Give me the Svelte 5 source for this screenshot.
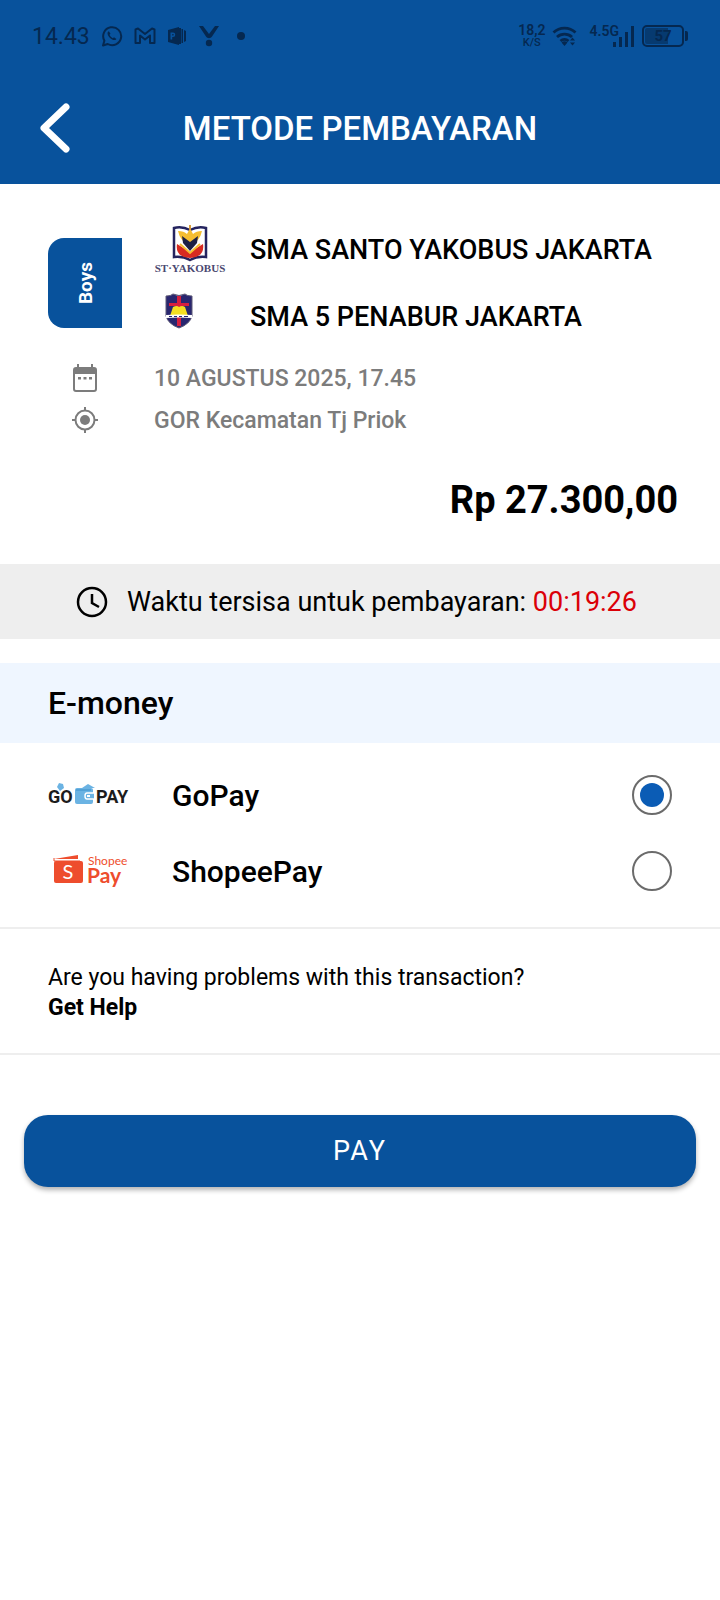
<script lang="ts">
	let method = 'gopay'

	const teams = [
		{ logo: 'yakobus', name: 'SMA SANTO YAKOBUS JAKARTA' },
		{ logo: 'penabur', name: 'SMA 5 PENABUR JAKARTA' }
	]

	const methods = [
		{ id: 'gopay', label: 'GoPay' },
		{ id: 'shopeepay', label: 'ShopeePay' }
	]
</script>

<div class="screen">
	<header>
		<div class="status">
			<div class="left">
				<span class="time">14.43</span>
				<svg width="22" height="22" viewBox="0 0 22 22" fill="none" stroke="currentColor" stroke-width="2">
					<path d="M2 20.500l1.400-4.800A9 9 0 1 1 6.700 19z" stroke-linejoin="round" />
					<path d="M7.800 6.200c-2 1-1.500 4 1 6.500s5.400 3.300 6.600 1.200l-2.400-1.700-1.200 1c-1.500-.6-2.700-1.800-3.300-3.400l1-1z" fill="currentColor" stroke="none" />
				</svg>
				<svg width="22" height="18" viewBox="0 0 22 18" fill="none" stroke="currentColor" stroke-width="2" stroke-linejoin="round">
					<path d="M1.500 16V2.500l2.500-1L11 7l7-5.500 2.500 1V16H16V8.500L11 12.500 6 8.500V16z" />
				</svg>
				<svg width="20" height="20" viewBox="0 0 20 20" fill="currentColor">
					<path fill-rule="evenodd" d="M1 4l11-3v18L1 16zM3.500 6.500v7h1.700V11H6a2.200 2.200 0 0 0 0-4.500zM5.200 8H6a.8.8 0 0 1 0 1.600h-.8z" />
					<path d="M12 2h2v16h-2zM14.500 3h1.500v14h-1.500zM17 4l2 1v10l-2 1z" />
				</svg>
				<svg width="22" height="22" viewBox="0 0 22 22" fill="currentColor">
					<path d="M1 1h4l6 8 6-8h4l-7 10.500c-1.500 2.200-4.500 2.200-6 0z" />
					<circle cx="11" cy="18" r="3.200" />
				</svg>
				<svg width="16" height="10" viewBox="0 0 16 10"><circle cx="10" cy="5" r="4" fill="currentColor" /></svg>
			</div>
			<div class="right">
				<span class="speed"><b>18,2</b><small>K/S</small></span>
				<svg width="26" height="22" viewBox="0 0 26 22" fill="none" stroke="currentColor" stroke-width="2.800">
					<path d="M1.500 7.500a16 16 0 0 1 22 0M5 12a11 11 0 0 1 15 0M8.500 16a6 6 0 0 1 8 0" />
					<path d="M9.500 17.500a4 4 0 0 1 6 0l-3 3.500zM18 15.500l2.500-3 2.500 3zM18 17.500l2.500 3 2.500-3z" fill="currentColor" stroke="none" />
				</svg>
				<span class="signal">
					<b>4.5G</b>
					<svg width="22" height="22" viewBox="0 0 22 22" fill="currentColor">
						<path d="M0 17h3v5H0zM6 12h3v10H6zM12 7h3v15h-3zM18 1h3v21h-3z" />
					</svg>
				</span>
				<span class="battery"><b>57</b></span>
			</div>
		</div>
		<div class="title">
			<button class="back" aria-label="Back">
				<svg width="32" height="50" viewBox="0 0 32 50" fill="none" stroke="#fff" stroke-width="7" stroke-linecap="round" stroke-linejoin="round">
					<path d="M26 4L4 25l22 21" />
				</svg>
			</button>
			<h1>METODE PEMBAYARAN</h1>
		</div>
	</header>

	<section class="match">
		<div class="game">
			<div class="tag"><span>Boys</span></div>
			<div class="teams">
				{#each teams as team}
					<div class="team">
						{#if team.logo === 'yakobus'}
							<svg width="72" height="50" viewBox="0 0 72 50">
								<path d="M20 3q8-2 16 2 8-4 16-2v29q-9-1-16 3-7-4-16-3z" fill="#fff" stroke="#25245f" stroke-width="2.500" />
								<path d="M23 19q-2 13 13 14 15-1 13-14l-13 8z" fill="#d72a22" />
								<path d="M24 6q2 10 12 15 10-5 12-15-6 0-9 3l-3-6-3 6q-3-3-9-3z" fill="#f5bd2f" />
								<path d="M28 11l8 6 8-6-1 7-7 8-7-8z" fill="#1c2044" />
								<path d="M26 19l10 9 10-9" fill="none" stroke="#f5bd2f" stroke-width="2" />
								<path d="M36 0v5" stroke="#d89b3a" stroke-width="2" />
								<text x="36" y="47" text-anchor="middle" class="crest">ST·YAKOBUS</text>
							</svg>
						{:else}
							<svg class="shield" width="28" height="36" viewBox="0 0 28 36">
								<path d="M1 3q5 0 7-2 6 3 12 0 2 2 7 2v20q-2 8-13 12Q3 31 1 23z" fill="#29266f" stroke="#5c5876" />
								<path d="M12 3h4v7h8v3h-8v20h-4V13H4v-3h8z" fill="#d71f3e" />
								<path d="M5 23l3-9q4-2 6 0 3-2 6 0l3 9q-5-2-9 0-4-2-9 0z" fill="#f5df22" />
								<path d="M1 22q13-1 26 0v3q-13-1-26 0z" fill="#fff" />
								<path d="M4 23.500h3m2 0h3m2 0h3m2 0h4" stroke="#29266f" />
							</svg>
						{/if}
						<span>{team.name}</span>
					</div>
				{/each}
			</div>
		</div>

		<div class="details">
			<div class="info">
				<svg width="26" height="28" viewBox="0 0 26 28" fill="#7c7c7c">
					<path fill-rule="evenodd" d="M5 0h2v3h12V0h2v3h1q3 0 3 3v19q0 3-3 3H4q-3 0-3-3V6q0-3 3-3h1zM3 10v15q0 1 1 1h18q1 0 1-1V10z" />
					<path d="M6 13h3v2.500H6zM11.500 13h3v2.500h-3zM17 13h3v2.500h-3z" />
				</svg>
				<span>10 AGUSTUS 2025, 17.45</span>
			</div>
			<div class="info">
				<svg width="26" height="26" viewBox="0 0 26 26" fill="none" stroke="#7c7c7c" stroke-width="2">
					<circle cx="13" cy="13" r="9.500" />
					<circle cx="13" cy="13" r="5" fill="#7c7c7c" stroke="none" />
					<path d="M13 0v4M13 22v4M0 13h4M22 13h4" />
				</svg>
				<span>GOR Kecamatan Tj Priok</span>
			</div>
		</div>

		<div class="price">Rp 27.300,00</div>
	</section>

	<div class="timer">
		<svg width="32" height="32" viewBox="0 0 32 32" fill="none" stroke="#000" stroke-width="2.500">
			<circle cx="16" cy="16" r="14" />
			<path d="M16 8v9l7 4" />
		</svg>
		<span>Waktu tersisa untuk pembayaran: <time>00:19:26</time></span>
	</div>

	<h2>E-money</h2>

	<div class="methods">
		{#each methods as item}
			<label>
				<span class="brand">
					{#if item.id === 'gopay'}
						<svg width="84" height="24" viewBox="0 0 84 24">
							<path d="M9 4l2-4 4 1 1 4-4 3zM34 5l6-4 7 4z" fill="#6bb3e3" />
							<text x="0" y="20" class="go">GO</text>
							<rect x="27" y="5" width="18" height="16" rx="2" fill="#6bb3e3" />
							<path d="M28 7h15" stroke="#3b8fc9" />
							<path d="M46 10h-7q-2 0-2 3t2 3h7" fill="#6bb3e3" stroke="#fff" stroke-width="1.500" />
							<path d="M39 13h3" stroke="#fff" stroke-width="2" />
							<text x="48" y="20" class="go">PAY</text>
						</svg>
					{:else}
						<svg width="84" height="38" viewBox="0 0 84 38">
							<path d="M6 7l24-4v4z" fill="#ee4d2d" />
							<path d="M6 6v3h26" fill="none" stroke="#ee4d2d" />
							<rect x="6" y="9" width="29" height="22" rx="2" fill="#ee4d2d" />
							<text x="20" y="27" text-anchor="middle" class="mark">S</text>
							<text x="40" y="13" class="shopee">Shopee</text>
							<text x="39" y="31" class="pay">Pay</text>
						</svg>
					{/if}
				</span>
				<span class="name">{item.label}</span>
				<input type="radio" name="method" value={item.id} bind:group={method} />
			</label>
		{/each}
	</div>

	<div class="help">
		<p>Are you having problems with this transaction?</p>
		<a href="#help">Get Help</a>
	</div>

	<div class="action">
		<button class="submit">PAY</button>
	</div>
</div>

<style>
	:global(body) {
		margin: 0;
		background: #fff;
	}

	.screen {
		font-family: Roboto, 'Liberation Sans', sans-serif;
		color: #000;
	}

	svg {
		display: block;
		flex: none;
	}

	header {
		background: #08529c;
	}

	.status {
		display: flex;
		justify-content: space-between;
		align-items: center;
		height: 72px;
		padding: 0 32px;
		color: #052850;
	}

	.left,
	.right {
		display: flex;
		align-items: center;
		gap: 11px;
	}

	.right {
		gap: 7px;
	}

	.time {
		font-size: 23px;
	}

	.speed {
		display: flex;
		flex-direction: column;
		align-items: center;
		font-size: 14px;
		line-height: 13px;
	}

	.speed b,
	.signal b {
		font-weight: 600;
	}

	.speed small {
		font-size: 11px;
		line-height: 11px;
		font-weight: 500;
	}

	.signal {
		display: flex;
		align-items: center;
		margin-left: 4px;
	}

	.signal b {
		align-self: flex-start;
		margin-right: -6px;
		font-size: 14px;
		line-height: 12px;
	}

	.battery {
		position: relative;
		box-sizing: border-box;
		width: 42px;
		height: 22px;
		margin-right: 4px;
		padding: 1px;
		border: 2px solid;
		border-radius: 5px;
		font-size: 15px;
		line-height: 16px;
		text-align: center;
		background: linear-gradient(90deg, #063a70 65%, transparent 65%) content-box;
	}

	.battery::after {
		content: '';
		position: absolute;
		top: 4px;
		right: -6px;
		width: 3px;
		height: 10px;
		border-radius: 0 2px 2px 0;
		background: currentColor;
	}

	.title {
		display: grid;
		grid-template-columns: 32px 1fr 32px;
		align-items: center;
		height: 112px;
		padding: 0 40px;
	}

	button {
		border: 0;
		font-family: inherit;
		color: #fff;
		cursor: pointer;
	}

	.back {
		padding: 0;
		background: none;
	}

	h1 {
		margin: 0;
		font-size: 33px;
		font-weight: 500;
		text-align: center;
		color: #fff;
	}

	.match {
		padding: 32px 42px 40px 48px;
	}

	.game {
		display: flex;
		align-items: center;
		gap: 32px;
	}

	.tag {
		display: grid;
		place-items: center;
		width: 74px;
		height: 90px;
		border-radius: 16px 0 0 16px;
		background: #08529c;
	}

	.tag span {
		writing-mode: vertical-rl;
		transform: rotate(180deg);
		font-size: 19px;
		font-weight: 700;
		color: #fff;
	}

	.team {
		display: grid;
		grid-template-columns: 96px 1fr;
		align-items: center;
		height: 67px;
		font-size: 27px;
		font-weight: 500;
		white-space: nowrap;
	}

	.shield {
		margin-left: 11px;
		margin-bottom: 12px;
	}

	.crest {
		font: 700 11px 'Liberation Serif', serif;
		fill: #4a4870;
	}

	.details {
		margin-top: 7px;
	}

	.info {
		display: grid;
		grid-template-columns: 82px 1fr;
		align-items: center;
		height: 42px;
		padding-left: 24px;
		font-size: 23px;
		font-weight: 500;
		color: #7c7c7c;
	}

	.price {
		margin-top: 35px;
		font-size: 38px;
		line-height: 48px;
		font-weight: 700;
		text-align: right;
	}

	.timer {
		display: flex;
		align-items: center;
		gap: 19px;
		height: 75px;
		padding: 0 76px;
		background: #eee;
		font-size: 27px;
	}

	time {
		color: #db0007;
	}

	h2 {
		margin: 24px 0 0;
		padding: 0 48px;
		font-size: 32px;
		line-height: 80px;
		font-weight: 500;
		background: #eff6ff;
	}

	.methods {
		padding: 14px 48px 18px;
		border-bottom: 2px solid #eee;
	}

	label {
		display: flex;
		align-items: center;
		height: 76px;
		font-size: 30px;
		font-weight: 500;
		cursor: pointer;
	}

	.brand {
		width: 124px;
	}

	.name {
		flex: 1;
	}

	.go {
		font: 700 18px Roboto, sans-serif;
		fill: #1c1c1c;
	}

	.mark {
		font: 400 20px Lato, sans-serif;
		fill: #fff;
	}

	.shopee,
	.pay {
		font: 400 12px Lato, sans-serif;
		fill: #ee4d2d;
	}

	.pay {
		font-size: 21px;
		font-weight: 700;
	}

	input {
		appearance: none;
		box-sizing: border-box;
		width: 40px;
		height: 40px;
		margin: 0;
		border: 2px solid #6b6b6b;
		border-radius: 50%;
		background: #fff;
	}

	input:checked {
		padding: 6px;
		background: #0b5cb5 content-box;
	}

	.help {
		padding: 34px 48px 30px;
		border-bottom: 2px solid #eee;
		font-size: 23px;
		line-height: 30px;
	}

	p {
		margin: 0;
	}

	a {
		font-weight: 700;
		color: inherit;
		text-decoration: none;
	}

	.action {
		padding: 60px 24px;
	}

	.submit {
		width: 100%;
		height: 72px;
		border-radius: 24px;
		background: #08529c;
		box-shadow: 0 3px 5px rgba(0, 0, 0, 0.3);
		font-size: 27px;
		letter-spacing: 2px;
	}
</style>
